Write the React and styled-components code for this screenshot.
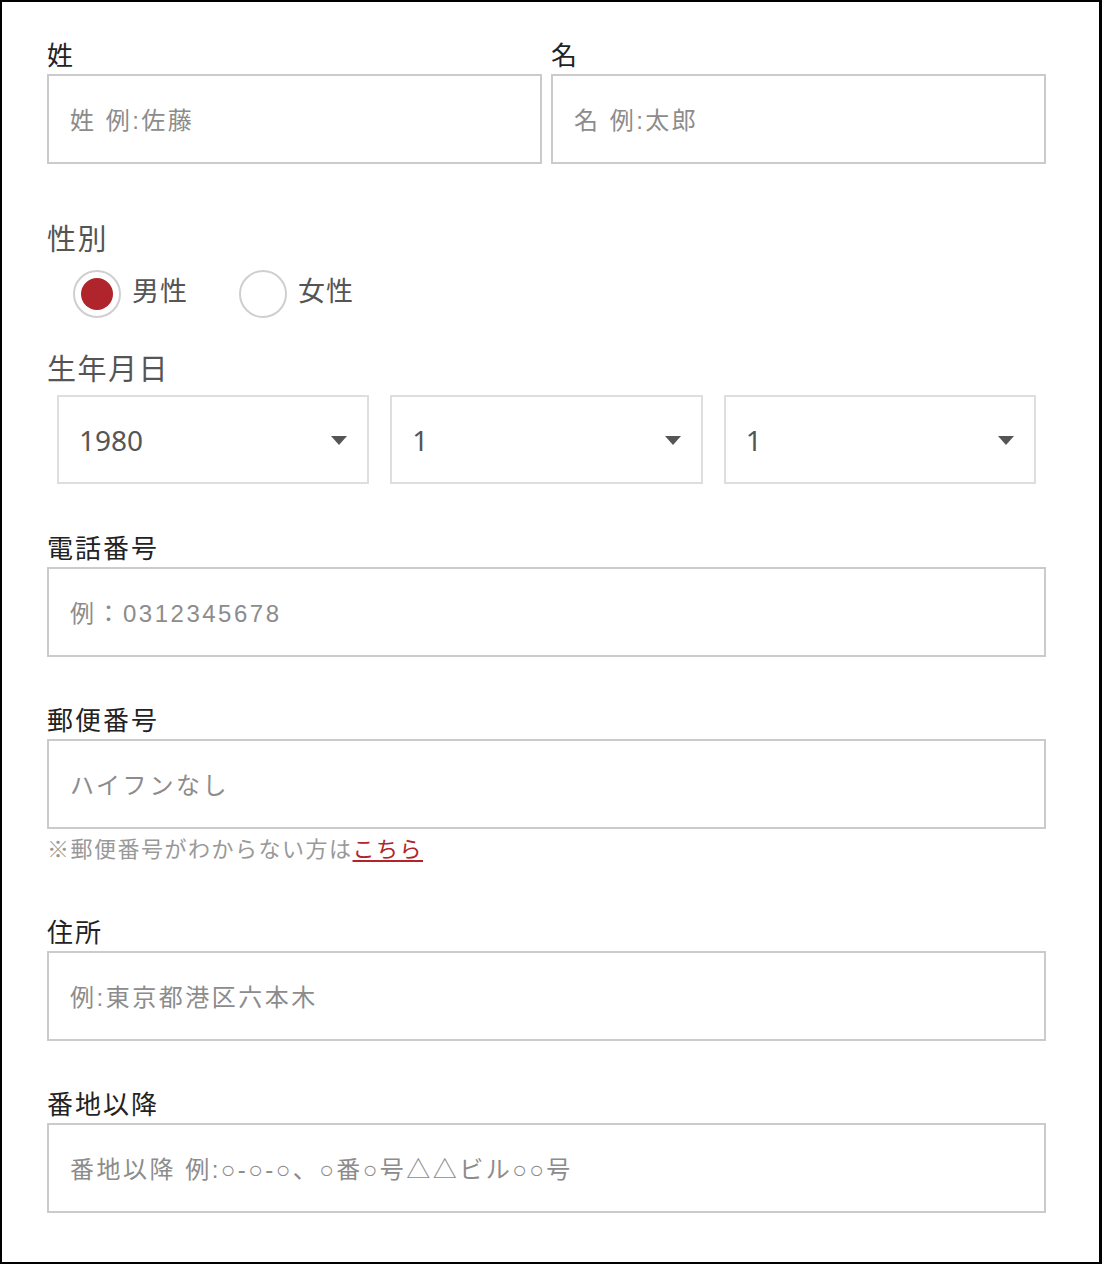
import React from 'react'
import styled, { createGlobalStyle } from 'styled-components'

const GlobalStyle = createGlobalStyle`
   * {
      box-sizing: border-box;
   }
   body {
      margin: 0;
      background: #fff;
      font-family: "Noto Sans CJK JP", "Noto Sans", sans-serif;
   }
`

const years = ['1980', '1981', '1982']
const nums = Array.from({ length: 12 }, (_, i) => String(i + 1))

const App = () => {
   return (
      <>
         <GlobalStyle />
         <Frame>
            <NameRow>
               <Field>
                  <Label>姓</Label>
                  <TextInput placeholder="姓 例:佐藤" />
               </Field>
               <Field>
                  <Label>名</Label>
                  <TextInput placeholder="名 例:太郎" />
               </Field>
            </NameRow>

            <Section $top={53}>
               <SectionTitle>性別</SectionTitle>
               <RadioGroup>
                  <RadioOption>
                     <Circle $checked />
                     <RadioText>男性</RadioText>
                  </RadioOption>
                  <RadioOption>
                     <Circle />
                     <RadioText>女性</RadioText>
                  </RadioOption>
               </RadioGroup>
            </Section>

            <Section $top={29}>
               <SectionTitle>生年月日</SectionTitle>
               <SelectRow>
                  <SelectBox>
                     <Select defaultValue="1980">
                        {years.map(y => <option key={y}>{y}</option>)}
                     </Select>
                     <Arrow />
                  </SelectBox>
                  <SelectBox>
                     <Select defaultValue="1">
                        {nums.map(n => <option key={n}>{n}</option>)}
                     </Select>
                     <Arrow />
                  </SelectBox>
                  <SelectBox>
                     <Select defaultValue="1">
                        {nums.map(n => <option key={n}>{n}</option>)}
                     </Select>
                     <Arrow />
                  </SelectBox>
               </SelectRow>
            </Section>

            <Field $top={47}>
               <Label>電話番号</Label>
               <TextInput placeholder="例：0312345678" />
            </Field>

            <Field $top={46}>
               <Label>郵便番号</Label>
               <TextInput placeholder="ハイフンなし" />
               <Note>
                  ※郵便番号がわからない方は<a href="#zip">こちら</a>
               </Note>
            </Field>

            <Field $top={53}>
               <Label>住所</Label>
               <TextInput placeholder="例:東京都港区六本木" />
            </Field>

            <Field $top={46}>
               <Label>番地以降</Label>
               <TextInput placeholder="番地以降 例:○-○-○、○番○号△△ビル○○号" />
            </Field>
         </Frame>
      </>
   )
}

const Arrow = () => (
   <ArrowIcon width="16" height="9" viewBox="0 0 16 9">
      <path d="M0 0 L16 0 L8 9 Z" fill="#555" />
   </ArrowIcon>
)

const Frame = styled.div`
   width: 1102px;
   height: 1264px;
   border-style: solid;
   border-color: #000;
   border-width: 2px 3px 2px 2px;
   padding: 36px 53px 0 45px;
   overflow: hidden;
`

const NameRow = styled.div`
   display: grid;
   grid-template-columns: 1fr 1fr;
   column-gap: 9px;
`

const Field = styled.div`
   display: flex;
   flex-direction: column;
   margin-top: ${p => p.$top || 0}px;
`

const Label = styled.label`
   font-size: 26px;
   line-height: 32px;
   letter-spacing: 2px;
   color: #222;
   margin-bottom: 4px;
`

const TextInput = styled.input`
   width: 100%;
   height: 90px;
   border: 2px solid #cbcbcb;
   border-radius: 0;
   padding: 4px 0 0 21px;
   font-family: "Liberation Sans", "Noto Sans CJK JP", sans-serif;
   font-size: 24px;
   letter-spacing: 2.5px;
   color: #333;
   outline: none;

   &::placeholder {
      color: #8c8c8c;
   }
`

const Section = styled.div`
   margin-top: ${p => p.$top}px;
`

const SectionTitle = styled.div`
   font-size: 29px;
   line-height: 40px;
   letter-spacing: 1.5px;
   color: #555;
`

const RadioGroup = styled.div`
   display: flex;
   align-items: center;
   gap: 51px;
   padding-left: 26px;
   margin-top: 13px;
`

const RadioOption = styled.label`
   display: flex;
   align-items: center;
   gap: 11px;
   cursor: pointer;
`

const RadioText = styled.span`
   font-size: 27px;
   line-height: 36px;
   letter-spacing: 1px;
   color: #555;
   padding-bottom: 9px;
`

const Circle = styled.span`
   width: 48px;
   height: 48px;
   border-radius: 50%;
   border: 2px solid #cfcfcf;
   display: flex;
   align-items: center;
   justify-content: center;

   &::after {
      content: '';
      width: 32px;
      height: 32px;
      border-radius: 50%;
      background: ${p => (p.$checked ? '#b0242b' : 'transparent')};
   }
`

const SelectRow = styled.div`
   display: grid;
   grid-template-columns: repeat(3, 1fr);
   column-gap: 21px;
   padding: 0 10px;
   margin-top: 8px;
`

const SelectBox = styled.div`
   position: relative;
`

const Select = styled.select`
   appearance: none;
   width: 100%;
   height: 89px;
   border: 2px solid #dedede;
   border-radius: 0;
   background: #fff;
   padding: 0 0 0 20px;
   font-family: "Noto Sans", "Noto Sans CJK JP", sans-serif;
   font-size: 28px;
   color: #555;
   outline: none;
`

const ArrowIcon = styled.svg`
   position: absolute;
   right: 22px;
   top: 41px;
   pointer-events: none;
`

const Note = styled.p`
   margin: 3px 0 0;
   font-size: 22px;
   line-height: 30px;
   letter-spacing: 1.5px;
   color: #999;

   a {
      color: #b0242b;
      text-decoration: underline;
      text-underline-offset: 3px;
   }
`

export default App
